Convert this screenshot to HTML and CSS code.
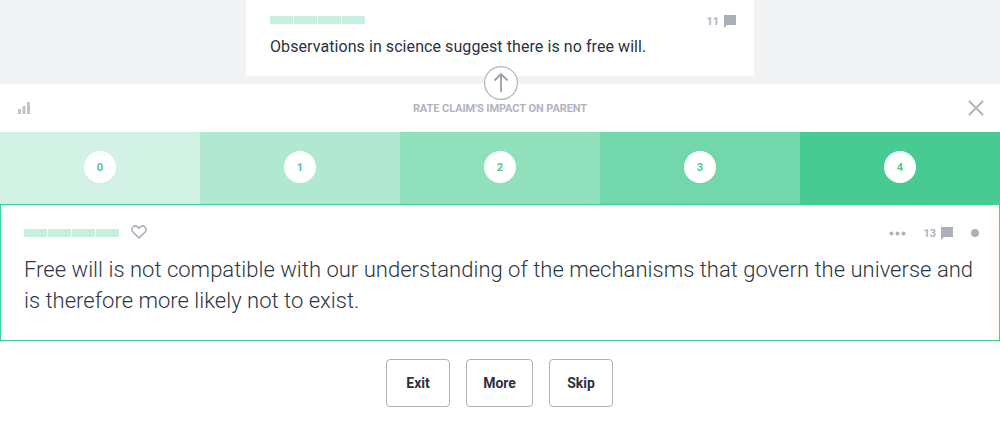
FILE: index.html
```html
<!DOCTYPE html>
<html lang="en">
<head>
<meta charset="utf-8">
<title>Rate claim</title>
<link rel="stylesheet" href="styles.css">
</head>
<body>
<section class="parent-area">
  <article class="parent-card">
    <div class="meta-row">
      <div class="bars"><i></i><i></i><i></i><i></i></div>
      <div class="count count-top">11
        <svg class="bubble" viewBox="0 0 12 13"><path d="M0 0H12V10H3L0 13Z"/></svg>
      </div>
    </div>
    <p class="parent-text">Observations in science suggest there is no free will.</p>
  </article>
</section>
<section class="panel">
  <div class="up-btn">
    <svg viewBox="0 0 34 34"><circle cx="17" cy="17" r="16.400"/><path d="M17 26V8M10.500 14.500L17 8L23.500 14.500"/></svg>
  </div>
  <header class="panel-head">
    <svg class="stats" viewBox="0 0 12 12"><path d="M0 7h3v5H0zM4.500 4h3v8h-3zM9 0h3v12H9z"/></svg>
    <h1 class="panel-title">RATE CLAIM'S IMPACT ON PARENT</h1>
    <svg class="close" viewBox="0 0 16 16"><path d="M1 1L15 15M15 1L1 15"/></svg>
  </header>
  <div class="scale">
    <div class="step s0"><span>0</span></div>
    <div class="step s1"><span>1</span></div>
    <div class="step s2"><span>2</span></div>
    <div class="step s3"><span>3</span></div>
    <div class="step s4"><span>4</span></div>
  </div>
  <article class="claim">
    <div class="claim-meta">
      <div class="bars"><i></i><i></i><i></i><i></i></div>
      <svg class="heart" viewBox="0 0 18 16"><path d="M9 14.800L2.300 8.300C.3 6.300.5 3.500 2.300 2.100C4.200.6 6.800 1 9 3.600C11.200 1 13.800.6 15.700 2.100C17.500 3.500 17.700 6.300 15.700 8.300Z"/></svg>
      <div class="claim-tools">
        <svg class="dots" viewBox="0 0 17 5"><circle cx="2.500" cy="2.500" r="2"/><circle cx="8.500" cy="2.500" r="2"/><circle cx="14.500" cy="2.500" r="2"/></svg>
        <div class="count">13
          <svg class="bubble" viewBox="0 0 12 13"><path d="M0 0H12V10H3L0 13Z"/></svg>
        </div>
        <span class="dot"></span>
      </div>
    </div>
    <p class="claim-text">Free will is not compatible with our understanding of the mechanisms that govern the universe and is therefore more likely not to exist.</p>
  </article>
  <div class="actions">
    <button class="btn btn-exit">Exit</button>
    <button class="btn btn-more">More</button>
    <button class="btn btn-skip">Skip</button>
  </div>
</section>
</body>
</html>
```
FILE: styles.css
```css
* { box-sizing: border-box; }
html, body { margin: 0; padding: 0; }
body {
  width: 1000px;
  height: 425px;
  overflow: hidden;
  background: #fff;
  font-family: Roboto, "Liberation Sans", sans-serif;
  color: #2f3640;
}
.parent-area {
  height: 84px;
  background: #f1f2f4;
  display: flex;
  justify-content: center;
  align-items: flex-start;
}
.parent-card {
  width: 508px;
  height: 76px;
  background: #fff;
  padding: 16px 18px 0 24px;
}
.meta-row { display: flex; justify-content: space-between; align-items: flex-start; }
.bars { display: flex; gap: 1px; }
.bars i { display: block; width: 23px; height: 8px; background: #c5f0dd; }
.count {
  display: flex;
  align-items: flex-start;
  gap: 5px;
  font-size: 11px;
  font-weight: 700;
  line-height: 13px;
  color: #aeb2ba;
}
.count-top { margin-top: -1px; }
.bubble { width: 12px; height: 13px; fill: #aab0b9; display: block; }
.parent-text { margin: 7px 0 0; font-size: 16px; letter-spacing: .075px; line-height: 24px; color: #2a3340; }
.panel { position: relative; }
.up-btn {
  position: absolute;
  left: 484px;
  top: -18px;
  width: 34px;
  height: 34px;
}
.up-btn svg { display: block; width: 34px; height: 34px; }
.up-btn circle { fill: #fff; stroke: #aeb2ba; stroke-width: 1.200; }
.up-btn path { fill: none; stroke: #9a9fa8; stroke-width: 1.800; }
.panel-head {
  height: 48px;
  display: flex;
  align-items: center;
  justify-content: space-between;
  padding: 0 16px 0 18px;
}
.stats { width: 12px; height: 12px; fill: #c0c4cb; display: block; margin-top: -1px; }
.panel-title {
  margin: 2px 0 0 2px;
  font-size: 11px;
  font-weight: 700;
  color: #b0b4bd;
  line-height: 14px;
  letter-spacing: -.07px;
}
.close { width: 16px; height: 16px; display: block; fill: none; stroke: #aeb2ba; stroke-width: 1.800; }
.scale { display: flex; height: 72px; padding-bottom: 2px; }
.step { flex: 1; display: flex; align-items: center; justify-content: center; margin-bottom: -2px; padding-bottom: 2px; }
.step span {
  width: 32px;
  height: 32px;
  border-radius: 50%;
  background: #fff;
  display: flex;
  align-items: center;
  justify-content: center;
  font-size: 11px;
  font-weight: 700;
  color: #48cb92;
}
.s0 { background: #d1f2e4; }
.s1 { background: #b0e8d1; }
.s2 { background: #90e0bd; }
.s3 { background: #72d7ac; }
.s4 { background: #48cb92; }
.claim {
  height: 137px;
  border: 1px solid #40d395;
  padding: 20px 20px 0 23px;
}
.claim-meta { display: flex; align-items: center; height: 16px; }
.heart { width: 16px; height: 14px; margin: 0 0 2px 12px; fill: none; stroke: #aeb2ba; stroke-width: 1.900; display: block; }
.claim-tools { margin-left: auto; display: flex; align-items: center; }
.dots { width: 17px; height: 5px; fill: #aeb2ba; display: block; margin-right: 17px; }
.claim-tools .count { align-items: center; gap: 5px; }
.dot { width: 8px; height: 8px; border-radius: 50%; background: #aab0b9; margin-left: 18px; }
.claim-text {
  margin: 13px 0 0;
  font-size: 22px;
  font-weight: 300;
  letter-spacing: .022px;
  line-height: 31px;
  color: #2d3744;
}
.actions { display: flex; justify-content: center; gap: 16px; padding: 18px 1px 0 0; }
.btn {
  height: 48px;
  background: #fff;
  border: 1px solid #aeb2ba;
  border-radius: 4px;
  font-family: inherit;
  font-size: 14px;
  font-weight: 700;
  color: #2a3340;
  padding: 0;
}
.btn-exit { width: 64px; }
.btn-more { width: 67px; }
.btn-skip { width: 64px; }
```
